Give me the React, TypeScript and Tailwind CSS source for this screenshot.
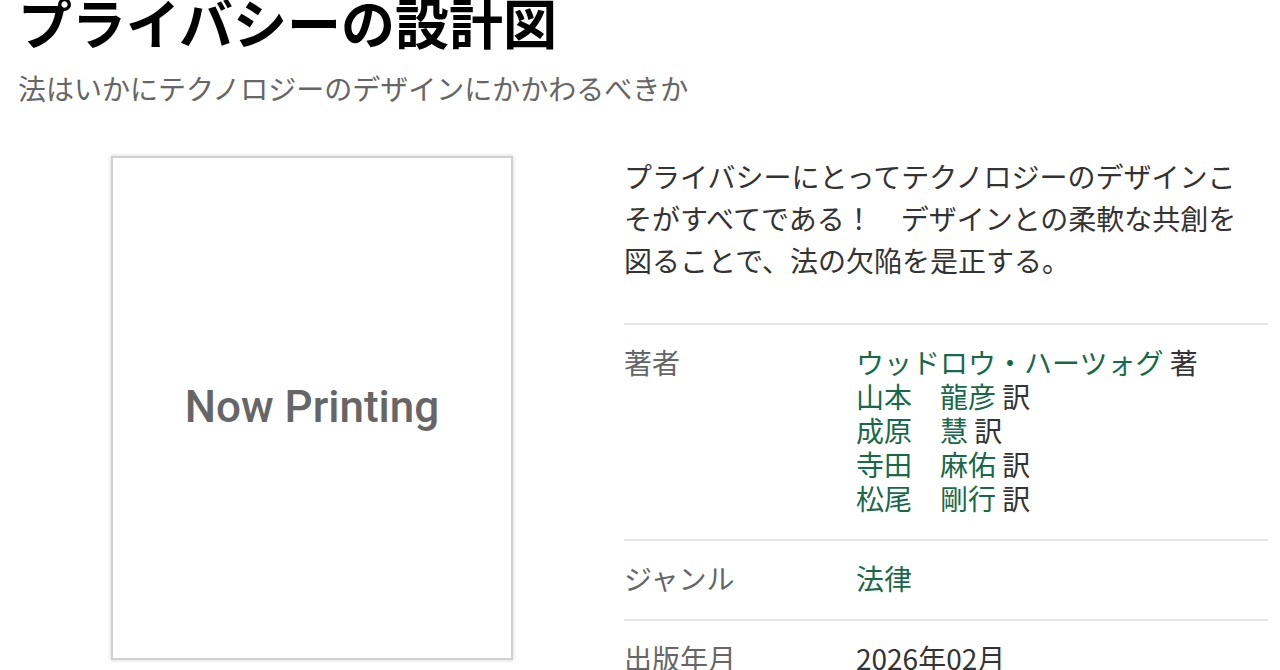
import React from "react";

const jp = "font-['Noto_Sans_CJK_JP',sans-serif]";

interface Credit {
  name: string;
  role: string;
}

const credits: Credit[] = [
  { name: "ウッドロウ・ハーツォグ", role: "著" },
  { name: "山本　龍彦", role: "訳" },
  { name: "成原　慧", role: "訳" },
  { name: "寺田　麻佑", role: "訳" },
  { name: "松尾　剛行", role: "訳" },
];

function Row({ label, children }: { label: string; children: React.ReactNode }) {
  return (
    <div className="flex border-t-2 border-[#e6e6e6] pt-[20px] pb-[24px] text-[28px] leading-[34px]">
      <div className="w-[232px] shrink-0 text-[#666]">{label}</div>
      <div className="flex-1">{children}</div>
    </div>
  );
}

export default function App() {
  return (
    <div className={`${jp} bg-white pr-[12px] pl-[18px] overflow-hidden h-[670px]`}>
      <h1 className="text-[54px] font-bold leading-none text-black mt-[-5px]">
        プライバシーの設計図
      </h1>
      <p className="text-[28px] leading-[40px] text-[#666] mt-[19px]">
        法はいかにテクノロジーのデザインにかかわるべきか
      </p>

      <div className="flex mt-[48px]">
        {/* cover */}
        <div className="w-[588px] shrink-0 flex justify-center">
          <div className="w-[402px] h-[504px] bg-white border-2 border-[#d0d0d0] shadow-[0_0_4px_rgba(0,0,0,0.18)] flex items-center justify-center">
            <span className="font-['Roboto',sans-serif] font-medium text-[44px] text-[#666] -mt-[2px]">
              Now Printing
            </span>
          </div>
        </div>

        {/* details */}
        <div className="ml-[18px] flex-1">
          <p className="text-[28px] leading-[42px] text-[#333] pr-[16px] -mt-[1px]">
            プライバシーにとってテクノロジーのデザインこそがすべてである！　デザインとの柔軟な共創を図ることで、法の欠陥を是正する。
          </p>

          <div className="mt-[42px]">
            <Row label="著者">
              {credits.map((c) => (
                <div key={c.name}>
                  <a href="#" className="text-[#17694a]">{c.name}</a>
                  <span className="text-[#333]"> {c.role}</span>
                </div>
              ))}
            </Row>
            <Row label="ジャンル">
              <a href="#" className="text-[#17694a]">法律</a>
            </Row>
            <Row label="出版年月">
              <span className="text-[#333]">2026年02月</span>
            </Row>
          </div>
        </div>
      </div>
    </div>
  );
}
